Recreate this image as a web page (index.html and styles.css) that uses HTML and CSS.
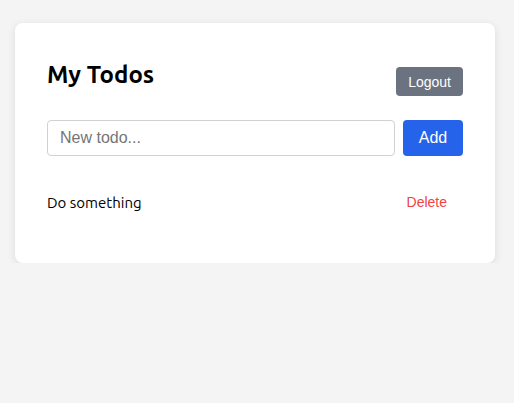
FILE: index.html
```html
<!DOCTYPE html>
<html lang="en">
<head>
<meta charset="utf-8">
<title>My Todos</title>
<link rel="stylesheet" href="styles.css">
</head>
<body>
  <main class="card">
    <header class="card-header">
      <h1 class="title">My Todos</h1>
      <button class="btn btn-logout" type="button">Logout</button>
    </header>
    <form class="todo-form">
      <input class="todo-input" type="text" placeholder="New todo...">
      <button class="btn btn-add" type="button">Add</button>
    </form>
    <ul class="todo-list">
      <li class="todo-item">
        <span class="todo-text">Do something</span>
        <button class="btn btn-delete" type="button">Delete</button>
      </li>
    </ul>
  </main>
</body>
</html>
```

FILE: styles.css
```css
* {
  box-sizing: border-box;
}

body {
  margin: 0;
  padding: 23px 0 0 15px;
  background: #f4f4f4;
  font-family: Ubuntu, "Noto Sans", "Open Sans", sans-serif;
  color: #000;
}

.card {
  width: 480px;
  padding: 32px;
  background: #fff;
  border-radius: 8px;
  box-shadow: 0 2px 8px rgba(0, 0, 0, 0.1);
}

.card-header {
  display: flex;
  justify-content: space-between;
  align-items: flex-start;
  margin-bottom: 24px;
}

.title {
  margin: 6px 0 0;
  font-size: 24px;
  font-weight: 700;
  line-height: 28px;
}

.btn {
  border: none;
  border-radius: 4px;
  font-family: "Liberation Sans", Arial, sans-serif;
  cursor: pointer;
}

.btn-logout {
  margin-top: 12px;
  height: 29px;
  padding: 0 12px;
  background: #6b7280;
  color: #fff;
  font-size: 14px;
}

.todo-form {
  display: flex;
  gap: 8px;
}

.todo-input {
  flex: 1;
  height: 36px;
  padding: 0 12px;
  border: 1px solid #d1d1d6;
  border-radius: 4px;
  font-family: "Liberation Sans", Arial, sans-serif;
  font-size: 16px;
  color: #111;
}

.todo-input::placeholder {
  color: #757575;
}

.btn-add {
  width: 60px;
  height: 36px;
  background: #2563eb;
  color: #fff;
  font-size: 16px;
}

.todo-list {
  list-style: none;
  margin: 29px 0 12px;
  padding: 0;
}

.todo-item {
  display: flex;
  justify-content: space-between;
  align-items: center;
  height: 34px;
}

.todo-text {
  font-size: 15px;
}

.btn-delete {
  padding: 8px 16px;
  background: transparent;
  color: #ef4444;
  font-size: 14px;
}
```
